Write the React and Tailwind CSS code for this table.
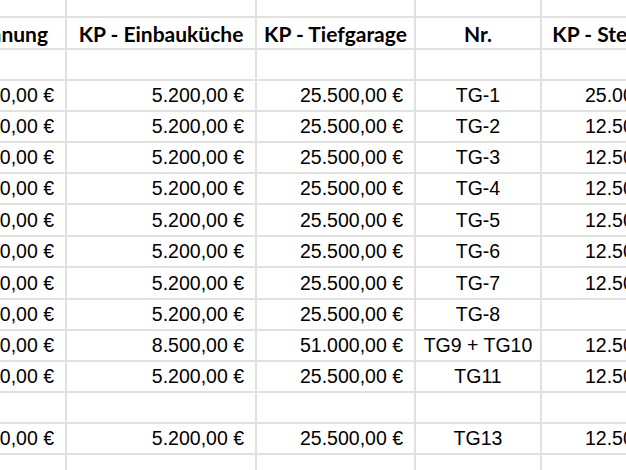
import React from "react";

const rows = [
  { h: "h-[29px]", c: ["", "", "", "", ""] },
  { h: "h-[29px]", c: ["310.000,00 €", "5.200,00 €", "25.500,00 €", "TG-1", "25.000,00 €"] },
  { h: "h-[29px]", c: ["310.000,00 €", "5.200,00 €", "25.500,00 €", "TG-2", "12.500,00 €"] },
  { h: "h-[29px]", c: ["310.000,00 €", "5.200,00 €", "25.500,00 €", "TG-3", "12.500,00 €"] },
  { h: "h-[29px]", c: ["310.000,00 €", "5.200,00 €", "25.500,00 €", "TG-4", "12.500,00 €"] },
  { h: "h-[30px]", c: ["310.000,00 €", "5.200,00 €", "25.500,00 €", "TG-5", "12.500,00 €"] },
  { h: "h-[29px]", c: ["310.000,00 €", "5.200,00 €", "25.500,00 €", "TG-6", "12.500,00 €"] },
  { h: "h-[30px]", c: ["310.000,00 €", "5.200,00 €", "25.500,00 €", "TG-7", "12.500,00 €"] },
  { h: "h-[29px]", c: ["310.000,00 €", "5.200,00 €", "25.500,00 €", "TG-8", ""] },
  { h: "h-[29px]", c: ["310.000,00 €", "8.500,00 €", "51.000,00 €", "TG9 + TG10", "12.500,00 €"] },
  { h: "h-[29px]", c: ["310.000,00 €", "5.200,00 €", "25.500,00 €", "TG11", "12.500,00 €"] },
  { h: "h-[29px]", c: ["", "", "", "", ""] },
  { h: "h-[29px]", c: ["310.000,00 €", "5.200,00 €", "25.500,00 €", "TG13", "12.500,00 €"] },
  { h: "h-[29px]", c: ["", "", "", "", ""] },
];

const widths = ["w-[200px]", "w-[188px]", "w-[157px]", "w-[124px]", "w-[157px]"];
const headers = ["KP - Wohnung", "KP - Einbauküche", "KP - Tiefgarage", "Nr.", "KP - Stellplatz"];

export default function App() {
  return (
    <div className="w-[626px] h-[470px] overflow-hidden bg-white">
      <div className="ml-[-135px] flex flex-col gap-[2px] bg-[#e1e1e1] w-max">
        <div className="flex gap-[2px] h-[16px]">
          {widths.map((w, i) => (
            <div key={i} className={`${w} bg-white`} />
          ))}
        </div>
        <div className="flex gap-[2px] h-[30px]">
          {headers.map((t, i) => (
            <div
              key={i}
              className={`${widths[i]} bg-white flex items-end pb-[4px] ${i === 0 ? "justify-end pr-[17px]" : i === 4 ? "justify-center pr-[6px]" : "justify-center"} overflow-hidden whitespace-nowrap font-['Lato',sans-serif] font-bold text-[21px] leading-none text-black`}
            >
              {t}
            </div>
          ))}
        </div>
        {rows.map((r, ri) => (
          <div key={ri} className={`flex gap-[2px] ${r.h}`}>
            {r.c.map((t, i) => (
              <div
                key={i}
                className={`${widths[i]} bg-white flex items-end pb-[5px] ${i === 3 ? "justify-center" : "justify-end pr-[11px]"} overflow-hidden whitespace-nowrap font-['Liberation_Sans',Arial,sans-serif] text-[19.5px] leading-none text-black`}
              >
                {t}
              </div>
            ))}
          </div>
        ))}
      </div>
    </div>
  );
}
